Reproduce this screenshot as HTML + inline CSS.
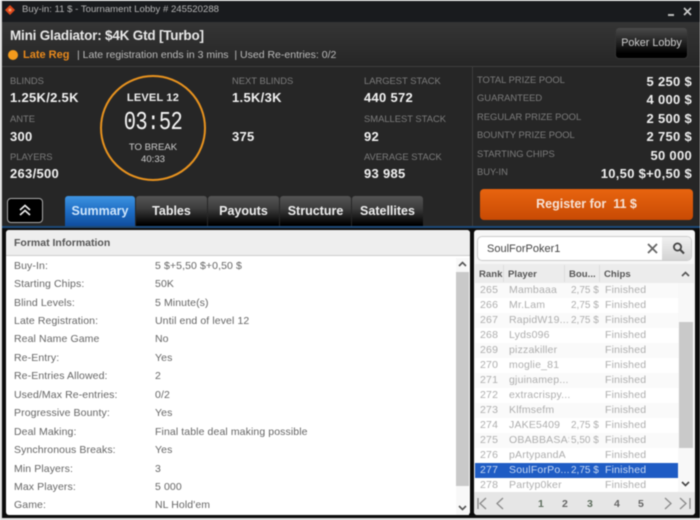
<!DOCTYPE html>
<html><head><meta charset="utf-8">
<style>
html,body{margin:0;padding:0;background:#fff}
#w{position:relative;width:700px;height:520px;overflow:hidden;background:#262626;font-family:"Liberation Sans",sans-serif;filter:blur(.45px)}
#w div,#w span{position:absolute;white-space:nowrap}
.t{line-height:14px}
.l{color:#7c7c7c;font-size:9.4px}
.v{color:#f2f2f2;font-size:13px;font-weight:bold;letter-spacing:.3px}
.pl{color:#7c7c7c;font-size:9.4px;left:477px}
.pv{color:#eee;font-size:13px;font-weight:bold;right:8px;letter-spacing:.3px}
.tab{top:196px;height:31px;width:71px;background:linear-gradient(#555,#3c3c3c 40%,#000 92%);color:#eee;font-size:12.5px;font-weight:bold;text-align:center;line-height:30px;border-radius:3px 3px 0 0}
.k{left:14px;color:#666;font-size:10.5px;letter-spacing:.1px}
.d{left:155px;color:#666;font-size:10.5px;letter-spacing:.1px}
.r{left:475px;width:203px;height:15px}
.c{color:#aeaeae;font-size:10.5px;line-height:15px;top:0;letter-spacing:.2px}
.b{left:96px;font-size:10px;letter-spacing:0}
.f{left:130px}
.hd{top:267px;color:#555;font-size:9.6px;font-weight:bold;line-height:15px}
.pg{top:497px;color:#666;font-size:10.5px;font-weight:bold;line-height:14px}
</style></head><body><div id="w">
<div style="left:0;top:0;width:700px;height:1px;background:#ddd"></div>
<div style="left:0;top:0;width:2px;height:520px;background:#dcdcdc"></div>
<div style="left:2px;top:1px;width:698px;height:21px;background:#191b1e"></div>
<svg style="position:absolute;left:4px;top:4px" width="13" height="13"><path d="M6 1L11 6L6 11L1 6Z" fill="#e04a1c"/><circle cx="6" cy="6" r="1.500" fill="#f5a06a"/></svg>
<div class="t" style="left:22px;top:3px;color:#b5b5b5;font-size:9.6px">Buy-in: 11 $ - Tournament Lobby # 245520288</div>
<div style="left:668px;top:14px;width:6px;height:1.5px;background:#bbb"></div>
<svg style="position:absolute;left:683px;top:7px" width="9" height="9"><path d="M1 1L8 8M8 1L1 8" stroke="#ccc" stroke-width="1.6"/></svg>

<div style="left:2px;top:22px;width:698px;height:44px;background:linear-gradient(#353535,#262626)"></div>
<div style="left:2px;top:66px;width:698px;height:1px;background:#3e3e3e"></div>
<div class="t" style="left:10px;top:29px;color:#e8e8e8;font-size:13.5px;font-weight:bold;letter-spacing:-.2px">Mini Gladiator: $4K Gtd [Turbo]</div>
<div style="left:8px;top:50px;width:10px;height:10px;border-radius:50%;background:#f39a1c"></div>
<div class="t" style="left:23px;top:48px;color:#e8891c;font-size:11px;font-weight:bold">Late Reg</div>
<div class="t" style="left:77px;top:48px;color:#bbb;font-size:10.5px">| Late registration ends in 3 mins&nbsp; | Used Re-entries: 0/2</div>
<div style="left:615px;top:27px;width:73px;height:32px;box-sizing:border-box;border:1px solid #333;border-radius:4px;background:linear-gradient(#4a4a4a,#1c1c1c 55%,#000 85%);color:#ccc;font-size:10.8px;text-align:center;line-height:31px">Poker Lobby</div>

<div class="t l" style="left:10px;top:74px">BLINDS</div>
<div class="t v" style="left:10px;top:91px">1.25K/2.5K</div>
<div class="t l" style="left:10px;top:112px">ANTE</div>
<div class="t v" style="left:10px;top:130px">300</div>
<div class="t l" style="left:10px;top:150px">PLAYERS</div>
<div class="t v" style="left:10px;top:167px">263/500</div>

<div style="left:100px;top:75px;width:106px;height:106px;box-sizing:border-box;border:2.5px solid #e8931f;border-radius:50%"></div>
<div class="t" style="left:100px;width:106px;text-align:center;top:91px;color:#eee;font-size:11px;font-weight:bold;letter-spacing:.2px">LEVEL 12</div>
<div style="left:100px;width:106px;text-align:center;top:112px;color:#f4f4f4;font-size:20.5px;line-height:24px;font-family:'Liberation Mono',monospace;letter-spacing:-.6px;transform:scaleY(1.25)">03:52</div>
<div class="t" style="left:100px;width:106px;text-align:center;top:141px;color:#ccc;font-size:9.6px">TO BREAK</div>
<div class="t" style="left:100px;width:106px;text-align:center;top:153px;color:#ccc;font-size:9.6px">40:33</div>

<div class="t l" style="left:232px;top:74px">NEXT BLINDS</div>
<div class="t v" style="left:232px;top:91px">1.5K/3K</div>
<div class="t v" style="left:232px;top:130px">375</div>

<div class="t l" style="left:364px;top:74px">LARGEST STACK</div>
<div class="t v" style="left:364px;top:91px">440 572</div>
<div class="t l" style="left:364px;top:112px">SMALLEST STACK</div>
<div class="t v" style="left:364px;top:130px">92</div>
<div class="t l" style="left:364px;top:150px">AVERAGE STACK</div>
<div class="t v" style="left:364px;top:167px">93 985</div>

<div style="left:472px;top:67px;width:1px;height:160px;background:#3c3c3c"></div>
<div class="t pl" style="top:73px">TOTAL PRIZE POOL</div><div class="t pv" style="top:75px">5 250 $</div>
<div class="t pl" style="top:91px">GUARANTEED</div><div class="t pv" style="top:93px">4 000 $</div>
<div class="t pl" style="top:110px">REGULAR PRIZE POOL</div><div class="t pv" style="top:112px">2 500 $</div>
<div class="t pl" style="top:128px">BOUNTY PRIZE POOL</div><div class="t pv" style="top:130px">2 750 $</div>
<div class="t pl" style="top:147px">STARTING CHIPS</div><div class="t pv" style="top:149px">50 000</div>
<div class="t pl" style="top:165px">BUY-IN</div><div class="t pv" style="top:167px">10,50 $+0,50 $</div>
<div style="left:480px;top:189px;width:213px;height:31px;border-radius:4px;background:linear-gradient(#e8640f,#c84a04);color:#f6e2d6;font-size:12.5px;font-weight:bold;text-align:center;line-height:30px">Register for&nbsp; 11 $</div>

<div style="left:7px;top:198px;width:36px;height:25px;box-sizing:border-box;border:1px solid #aaa;border-radius:4px;background:#000"></div>
<svg style="position:absolute;left:18px;top:203px" width="14" height="14"><path d="M2 7L7 2.500L12 7M2 12L7 7.500L12 12" fill="none" stroke="#eee" stroke-width="1.6"/></svg>
<div class="tab" style="left:65px;width:70px;background:linear-gradient(#3f94e0,#1d6cc4 50%,#0f4c9c);color:#cfe6fb">Summary</div>
<div class="tab" style="left:136px">Tables</div>
<div class="tab" style="left:208px">Payouts</div>
<div class="tab" style="left:280px">Structure</div>
<div class="tab" style="left:352px">Satellites</div>
<div style="left:2px;top:226px;width:698px;height:2px;background:#1d4a78"></div>
<div style="left:2px;top:228px;width:698px;height:290px;background:#0c0c0c"></div>
<div style="left:0;top:518px;width:700px;height:2px;background:#dedede"></div>

<div style="left:6px;top:230px;width:464px;height:285px;background:#fff;border-radius:3px;overflow:hidden"></div>
<div style="left:6px;top:230px;width:464px;height:25px;background:#eee;border-bottom:1px solid #ccc;border-radius:3px 3px 0 0"></div>
<div class="t" style="left:14px;top:236px;color:#555;font-size:10.5px;font-weight:bold">Format Information</div>
<div style="left:456px;top:258px;width:13px;height:257px;background:#f8f8f8"></div>
<div style="left:456px;top:272px;width:13px;height:214px;background:#c9c9c9"></div>
<svg style="position:absolute;left:458px;top:260px" width="9" height="8"><path d="M1 6L4.500 2.500L8 6" fill="none" stroke="#555" stroke-width="1.6"/></svg>
<svg style="position:absolute;left:458px;top:504px" width="9" height="8"><path d="M1 2L4.500 5.500L8 2" fill="none" stroke="#555" stroke-width="1.6"/></svg>

<div class="t k" style="top:259px">Buy-In:</div><div class="t d" style="top:259px">5 $+5,50 $+0,50 $</div>
<div class="t k" style="top:277px">Starting Chips:</div><div class="t d" style="top:277px">50K</div>
<div class="t k" style="top:296px">Blind Levels:</div><div class="t d" style="top:296px">5 Minute(s)</div>
<div class="t k" style="top:314px">Late Registration:</div><div class="t d" style="top:314px">Until end of level 12</div>
<div class="t k" style="top:332px">Real Name Game</div><div class="t d" style="top:332px">No</div>
<div class="t k" style="top:351px">Re-Entry:</div><div class="t d" style="top:351px">Yes</div>
<div class="t k" style="top:369px">Re-Entries Allowed:</div><div class="t d" style="top:369px">2</div>
<div class="t k" style="top:388px">Used/Max Re-entries:</div><div class="t d" style="top:388px">0/2</div>
<div class="t k" style="top:406px">Progressive Bounty:</div><div class="t d" style="top:406px">Yes</div>
<div class="t k" style="top:425px">Deal Making:</div><div class="t d" style="top:425px">Final table deal making possible</div>
<div class="t k" style="top:443px">Synchronous Breaks:</div><div class="t d" style="top:443px">Yes</div>
<div class="t k" style="top:462px">Min Players:</div><div class="t d" style="top:462px">3</div>
<div class="t k" style="top:480px">Max Players:</div><div class="t d" style="top:480px">5 000</div>
<div class="t k" style="top:498px">Game:</div><div class="t d" style="top:498px">NL Hold'em</div>

<div style="left:474px;top:230px;width:221px;height:285px;background:#f6f6f6;border-radius:3px"></div>
<div style="left:477px;top:236px;width:215px;height:25px;box-sizing:border-box;border:1px solid #ccc;border-radius:5px;background:#fff"></div>
<div style="left:662px;top:237px;width:29px;height:23px;background:linear-gradient(#f0f0f0,#d4d4d4);border-radius:0 4px 4px 0"></div>
<div class="t" style="left:487px;top:242px;color:#444;font-size:11px">SoulForPoker1</div>
<svg style="position:absolute;left:647px;top:243px" width="11" height="11"><path d="M1 1L10 10M10 1L1 10" stroke="#666" stroke-width="1.8"/></svg>
<svg style="position:absolute;left:672px;top:242px" width="13" height="13"><circle cx="5.500" cy="5" r="3.6" fill="none" stroke="#444" stroke-width="1.8"/><path d="M8 7.500L12 11.500" stroke="#444" stroke-width="2"/></svg>

<div style="left:475px;top:264px;width:219px;height:19px;background:#ececec"></div>
<div class="hd" style="left:479px">Rank</div><div class="hd" style="left:508px">Player</div><div class="hd" style="left:569px">Bou...</div><div class="hd" style="left:604px">Chips</div>
<div style="left:503px;top:265px;width:1px;height:17px;background:#ddd"></div>
<div style="left:564px;top:265px;width:1px;height:17px;background:#ddd"></div>
<div style="left:599px;top:265px;width:1px;height:17px;background:#ddd"></div>

<div class="r" style="top:283px;background:#fafafa"><span class="c" style="left:5px">265</span><span class="c" style="left:34px">Mambaaa</span><span class="c b">2,75 $</span><span class="c f">Finished</span></div>
<div class="r" style="top:298px;background:#fff"><span class="c" style="left:5px">266</span><span class="c" style="left:34px">Mr.Lam</span><span class="c b">2,75 $</span><span class="c f">Finished</span></div>
<div class="r" style="top:313px;background:#fafafa"><span class="c" style="left:5px">267</span><span class="c" style="left:34px">RapidW19...</span><span class="c b">2,75 $</span><span class="c f">Finished</span></div>
<div class="r" style="top:328px;background:#fff"><span class="c" style="left:5px">268</span><span class="c" style="left:34px">Lyds096</span><span class="c f">Finished</span></div>
<div class="r" style="top:343px;background:#fafafa"><span class="c" style="left:5px">269</span><span class="c" style="left:34px">pizzakiller</span><span class="c f">Finished</span></div>
<div class="r" style="top:358px;background:#fff"><span class="c" style="left:5px">270</span><span class="c" style="left:34px">moglie_81</span><span class="c f">Finished</span></div>
<div class="r" style="top:373px;background:#fafafa"><span class="c" style="left:5px">271</span><span class="c" style="left:34px">gjuinamep...</span><span class="c f">Finished</span></div>
<div class="r" style="top:388px;background:#fff"><span class="c" style="left:5px">272</span><span class="c" style="left:34px">extracrispy...</span><span class="c f">Finished</span></div>
<div class="r" style="top:403px;background:#fafafa"><span class="c" style="left:5px">273</span><span class="c" style="left:34px">Klfmsefm</span><span class="c f">Finished</span></div>
<div class="r" style="top:418px;background:#fff"><span class="c" style="left:5px">274</span><span class="c" style="left:34px">JAKE5409</span><span class="c b">2,75 $</span><span class="c f">Finished</span></div>
<div class="r" style="top:433px;background:#fafafa"><span class="c" style="left:5px">275</span><span class="c" style="left:34px;width:60px;overflow:hidden">OBABBASAS</span><span class="c b">5,50 $</span><span class="c f">Finished</span></div>
<div class="r" style="top:448px;background:#fff"><span class="c" style="left:5px">276</span><span class="c" style="left:34px">pArtypandA</span><span class="c f">Finished</span></div>
<div class="r" style="top:463px;background:#1f5cc4"><span class="c" style="left:5px;color:#c8d8f2">277</span><span class="c" style="left:34px;color:#c8d8f2">SoulForPo...</span><span class="c b" style="color:#c8d8f2">2,75 $</span><span class="c f" style="color:#c8d8f2">Finished</span></div>
<div class="r" style="top:478px;background:#fff"><span class="c" style="left:5px">278</span><span class="c" style="left:34px">Partyp0ker</span><span class="c f">Finished</span></div>

<div style="left:678px;top:283px;width:16px;height:209px;background:#f8f8f8"></div>
<div style="left:679px;top:322px;width:14px;height:126px;background:#c9c9c9"></div>
<svg style="position:absolute;left:681px;top:270px" width="9" height="8"><path d="M1 6L4.500 2.500L8 6" fill="none" stroke="#555" stroke-width="1.6"/></svg>
<svg style="position:absolute;left:681px;top:480px" width="9" height="8"><path d="M1 2L4.500 5.500L8 2" fill="none" stroke="#444" stroke-width="1.6"/></svg>

<div style="left:474px;top:492px;width:221px;height:23px;background:#e6e6e6;border-radius:0 0 3px 3px"></div>
<svg style="position:absolute;left:474px;top:494px" width="221" height="20"><path d="M4 4V15M12 4L6 9.500L12 15M29 4L23 9.500L29 15M191 4L197 9.500L191 15M206 4L212 9.500L206 15M216 4V15" fill="none" stroke="#8a8a8a" stroke-width="1.3"/></svg>
<div class="pg" style="left:538px;color:#5f6f5f">1</div>
<div class="pg" style="left:562px">2</div>
<div class="pg" style="left:587px;color:#5f6f5f">3</div>
<div class="pg" style="left:614px">4</div>
<div class="pg" style="left:638px">5</div>
</div></body></html>
